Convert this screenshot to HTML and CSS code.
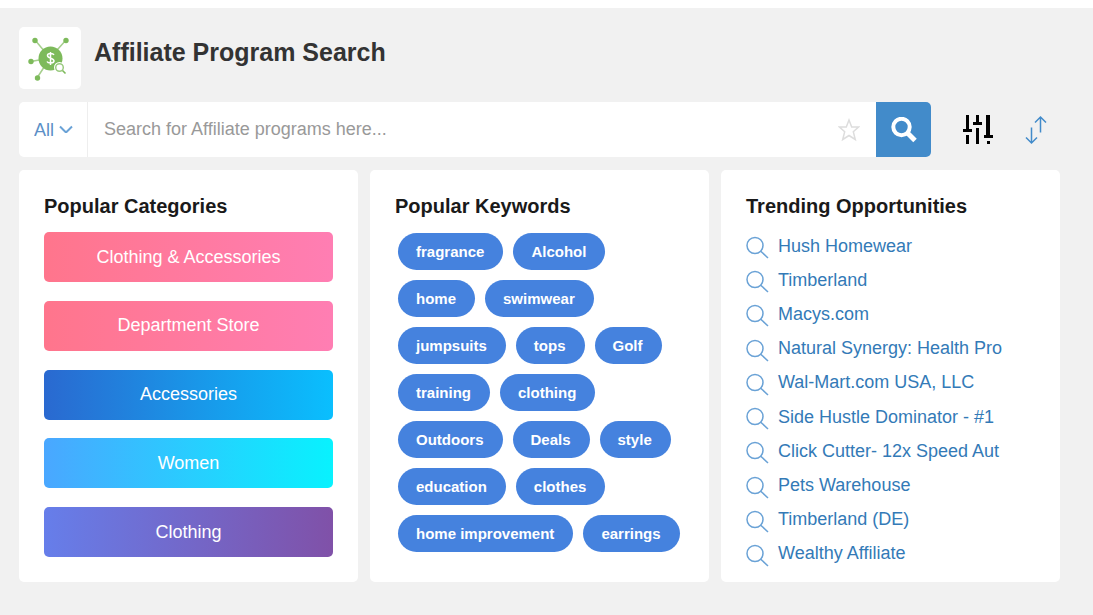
FILE: index.html
```html
<!DOCTYPE html>
<html lang="en">
<head>
    <meta charset="UTF-8">
    <meta name="viewport" content="width=device-width, initial-scale=1.0">
    <title>Affiliate Program Search</title>
    <link rel="stylesheet" href="styles.css">
</head>
<body>

    <!-- shared icons -->
    <svg class="sprite" aria-hidden="true">
        <symbol id="icon-search" viewBox="0 0 24 24">
            <circle cx="9" cy="9.500" r="8"/>
            <path d="M14.500 15L22 22"/>
        </symbol>
    </svg>

    <main class="container">
        <header class="page-header">
            <div class="logo">
                <svg viewBox="0 0 62 62" width="62" height="62" aria-hidden="true">
                    <g stroke="#a5cf8c" stroke-width="1.5">
                        <path d="M31 31L16 13M31 31L47 13M31 31L12 34.500M31 31L18 51"/>
                    </g>
                    <g fill="#7dba5b">
                        <circle cx="16" cy="13.500" r="2.700"/>
                        <circle cx="47" cy="13.500" r="2.700"/>
                        <circle cx="12" cy="34.500" r="2.700"/>
                        <circle cx="18.500" cy="51" r="2.700"/>
                        <circle cx="31.500" cy="31.500" r="12"/>
                    </g>
                    <path d="M35 28C34 26 28.500 26 28.500 28.500C28.500 32 35 30.500 35 34C35 36.500 29 36.500 28 34.500M31.500 25V38" fill="none" stroke="#fff" stroke-width="1.500"/>
                    <circle cx="40.500" cy="40.500" r="5.500" fill="#fff"/>
                    <circle cx="40.500" cy="40.500" r="3.800" fill="#fff" stroke="#9bca80" stroke-width="1.500"/>
                    <path d="M43.500 43.500L46.500 46.500" stroke="#7dba5b" stroke-width="1.600"/>
                </svg>
            </div>
            <h1>Affiliate Program Search</h1>
        </header>

        <div class="toolbar">
            <form class="search-form">
                <div class="scope">
                    <select class="scope-select" name="scope" aria-label="Search in">
                        <option>All</option>
                    </select>
                    <svg class="chevron" viewBox="0 0 14 9" width="14" height="9" aria-hidden="true">
                        <path d="M1 1.500L6 6.500Q7 7.500 8 6.500L13 1.500"/>
                    </svg>
                </div>
                <input class="search-input" type="text" name="q" placeholder="Search for Affiliate programs here..." aria-label="Search for Affiliate programs">
                <button class="star-button" type="button" aria-label="Favorites">
                    <svg viewBox="0 0 22 24" width="22" height="24" aria-hidden="true">
                        <path d="M11 2L13.700 9H20.500L15.300 13.700L17.300 21.500L11 17.500L4.700 21.500L6.700 13.700L1.500 9H8.300Z"/>
                    </svg>
                </button>
                <button class="search-button" type="submit" aria-label="Search">
                    <svg viewBox="0 0 26 26" width="26" height="26" aria-hidden="true">
                        <circle cx="10.500" cy="10" r="8.200"/>
                        <path d="M16 15.500L24 23.500" stroke-width="5"/>
                    </svg>
                </button>
            </form>
            <div class="tools">
                <button class="tool-button" type="button" aria-label="Filters">
                    <svg viewBox="0 0 30 30" width="30" height="30" shape-rendering="crispEdges" aria-hidden="true">
                        <path d="M3 0h3v14h3v3H0v-3h3zM3 20h3v9H3zM13 0h3v7h3v3h-9V7h3zM13 13h3v16h-3zM23 0h4v20h3v3h-9v-3h2zM24 26h3v3h-3z"/>
                    </svg>
                </button>
                <button class="tool-button sort" type="button" aria-label="Sort">
                    <svg viewBox="0 0 22 30" width="22" height="30" aria-hidden="true">
                        <path d="M6.500 12.500V28M1 22.500L6.500 28L12 22.500M15.500 17.500V2M10 7.500L15.500 2L21 7.500"/>
                    </svg>
                </button>
            </div>
        </div>

        <div class="cards">
            <section class="card">
                <h2>Popular Categories</h2>
                <div class="categories">
                    <button class="category pink" type="button">Clothing &amp; Accessories</button>
                    <button class="category pink" type="button">Department Store</button>
                    <button class="category blue" type="button">Accessories</button>
                    <button class="category cyan" type="button">Women</button>
                    <button class="category purple" type="button">Clothing</button>
                </div>
            </section>

            <section class="card">
                <h2>Popular Keywords</h2>
                <div class="keywords">
                    <button class="keyword" type="button">fragrance</button>
                    <button class="keyword" type="button">Alcohol</button>
                    <button class="keyword" type="button">home</button>
                    <button class="keyword" type="button">swimwear</button>
                    <button class="keyword" type="button">jumpsuits</button>
                    <button class="keyword" type="button">tops</button>
                    <button class="keyword" type="button">Golf</button>
                    <button class="keyword" type="button">training</button>
                    <button class="keyword" type="button">clothing</button>
                    <button class="keyword" type="button">Outdoors</button>
                    <button class="keyword" type="button">Deals</button>
                    <button class="keyword" type="button">style</button>
                    <button class="keyword" type="button">education</button>
                    <button class="keyword" type="button">clothes</button>
                    <button class="keyword" type="button">home improvement</button>
                    <button class="keyword" type="button">earrings</button>
                </div>
            </section>

            <section class="card trending">
                <h2>Trending Opportunities</h2>
                <ul class="trend-list">
                    <li><a href="#"><svg class="trend-icon" aria-hidden="true"><use href="#icon-search"/></svg>Hush Homewear</a></li>
                    <li><a href="#"><svg class="trend-icon" aria-hidden="true"><use href="#icon-search"/></svg>Timberland</a></li>
                    <li><a href="#"><svg class="trend-icon" aria-hidden="true"><use href="#icon-search"/></svg>Macys.com</a></li>
                    <li><a href="#"><svg class="trend-icon" aria-hidden="true"><use href="#icon-search"/></svg>Natural Synergy: Health Pro</a></li>
                    <li><a href="#"><svg class="trend-icon" aria-hidden="true"><use href="#icon-search"/></svg>Wal-Mart.com USA, LLC</a></li>
                    <li><a href="#"><svg class="trend-icon" aria-hidden="true"><use href="#icon-search"/></svg>Side Hustle Dominator - #1</a></li>
                    <li><a href="#"><svg class="trend-icon" aria-hidden="true"><use href="#icon-search"/></svg>Click Cutter- 12x Speed Aut</a></li>
                    <li><a href="#"><svg class="trend-icon" aria-hidden="true"><use href="#icon-search"/></svg>Pets Warehouse</a></li>
                    <li><a href="#"><svg class="trend-icon" aria-hidden="true"><use href="#icon-search"/></svg>Timberland (DE)</a></li>
                    <li><a href="#"><svg class="trend-icon" aria-hidden="true"><use href="#icon-search"/></svg>Wealthy Affiliate</a></li>
                </ul>
            </section>
        </div>
    </main>
</body>
</html>
```
FILE: styles.css
```css
* {
    box-sizing: border-box;
}

body {
    margin: 0;
    border-top: 8px solid #fff;
    min-height: 100vh;
    background-color: #f1f1f1;
    font-family: "Liberation Sans", Arial, sans-serif;
    font-size: 18px;
    color: #333;
}

button,
input,
select {
    font-family: inherit;
    font-size: inherit;
    border: none;
    padding: 0;
    background: none;
}

button {
    cursor: pointer;
}

svg {
    display: block;
}

.sprite {
    display: none;
}

.container {
    padding: 19px 33px 25px 19px;
}

.page-header {
    display: flex;
    gap: 13px;
    margin-bottom: 13px;
}

.logo {
    background-color: #fff;
    border-radius: 5px;
}

h1 {
    margin: 10px 0 0;
    font-size: 25px;
    line-height: 30px;
}

/* search bar */
.toolbar {
    display: flex;
    align-items: center;
    margin-bottom: 13px;
}

.search-form {
    display: flex;
    flex: 1;
    height: 55px;
    background-color: #fff;
    border-radius: 5px;
    overflow: hidden;
}

.scope {
    display: flex;
    align-items: center;
    gap: 4px;
    padding: 0 14px 0 15px;
    border-right: 1px solid #eee;
}

.scope-select {
    appearance: none;
    color: #5b8fc7;
}

.chevron {
    fill: none;
    stroke: #6aa2d6;
    stroke-width: 2;
}

.search-input {
    flex: 1;
    min-width: 0;
    padding: 0 16px;
    color: #333;
}

.search-input::placeholder {
    color: #999;
    opacity: 1;
}

.star-button {
    padding: 0 16px;
}

.star-button svg {
    fill: none;
    stroke: #ddd;
    stroke-width: 1.5;
}

.search-button {
    width: 55px;
    background-color: #428bca;
}

.search-button svg {
    margin: 0 auto;
    fill: none;
    stroke: #fff;
    stroke-width: 4;
}

.tools {
    display: flex;
    gap: 32px;
    padding: 0 13px 0 32px;
}

.sort svg {
    fill: none;
    stroke: #428bca;
    stroke-width: 1.5;
}

/* cards */
.cards {
    display: grid;
    grid-template-columns: repeat(3, 1fr);
    gap: 12px;
}

.card {
    display: flex;
    flex-direction: column;
    min-height: 412px;
    padding: 25px;
    background-color: #fff;
    border-radius: 5px;
}

h2 {
    margin: 0 0 15px;
    font-size: 20px;
    line-height: 22px;
    color: #1a1a1a;
}

.categories {
    display: flex;
    flex: 1;
    flex-direction: column;
    justify-content: space-between;
}

.category {
    height: 50px;
    border-radius: 5px;
    color: #fff;
}

.pink {
    background: linear-gradient(to right, #ff758c, #ff7eb3);
}

.blue {
    background: linear-gradient(to right, #2a69d0, #0abffe);
}

.cyan {
    background: linear-gradient(to right, #4aa7ff, #08f2fe);
}

.purple {
    background: linear-gradient(to right, #667eea, #8051a8);
}

.keywords {
    display: flex;
    flex-wrap: wrap;
    gap: 10px;
    padding: 1px 0 0 3px;
}

.keyword {
    height: 37px;
    padding: 0 19px 0 18px;
    border-radius: 20px;
    background-color: #4582de;
    color: #fff;
    font-size: 15px;
    font-weight: bold;
}

.trending {
    padding-bottom: 11px;
}

.trending h2 {
    margin-bottom: 12px;
}

.trend-list {
    display: flex;
    flex: 1;
    flex-direction: column;
    justify-content: space-between;
    margin: 0;
    padding: 0;
    list-style: none;
}

.trend-list a {
    display: flex;
    align-items: center;
    gap: 8px;
    height: 34px;
    color: #337ab7;
    text-decoration: none;
    white-space: nowrap;
}

.trend-icon {
    width: 24px;
    height: 24px;
    margin-top: 4px;
    fill: none;
    stroke: #6aa2d6;
    stroke-width: 1.5;
}
```
